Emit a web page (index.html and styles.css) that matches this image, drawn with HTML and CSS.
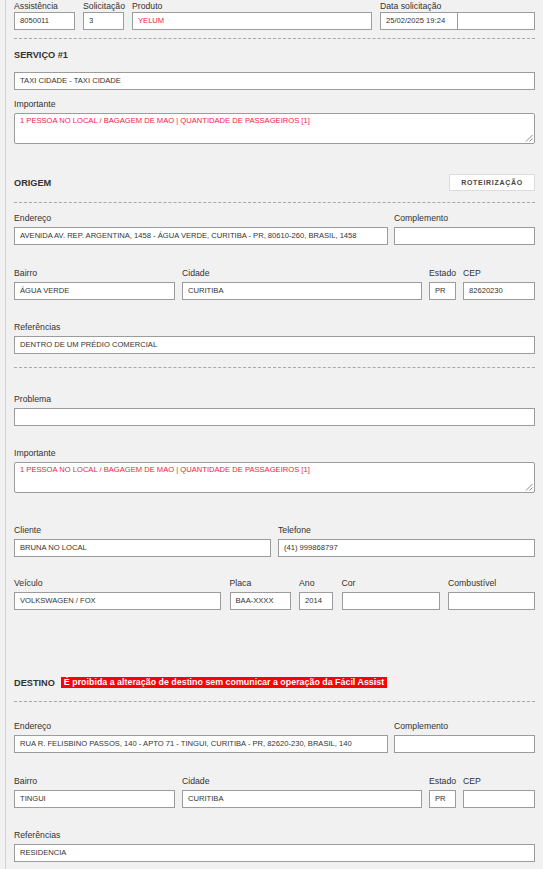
FILE: index.html
```html
<!DOCTYPE html>
<html lang="pt-BR">
<head>
<meta charset="utf-8">
<title>Atendimento</title>
<link rel="stylesheet" href="styles.css">
</head>
<body>
<div class="page">

  <div class="grid g-top">
    <div class="field top"><span class="lbl">Assistência</span><div class="box">8050011</div></div>
    <div class="field top"><span class="lbl">Solicitação</span><div class="box">3</div></div>
    <div class="field top"><span class="lbl">Produto</span><div class="box red">YELUM</div></div>
    <div class="field top"><span class="lbl">Data solicitação</span>
      <div class="pair"><div class="box date">25/02/2025 19:24</div><div class="box time"></div></div>
    </div>
  </div>

  <hr class="dash d1">
  <h3 class="sec s-servico">SERVIÇO #1</h3>
  <div class="box b-servico">TAXI CIDADE - TAXI CIDADE</div>
  <div class="field f-imp1"><span class="lbl">Importante</span>
    <div class="box area red">1 PESSOA NO LOCAL / BAGAGEM DE MAO | QUANTIDADE DE PASSAGEIROS [1]<span class="grip"><svg width="8" height="8" viewBox="0 0 8 8"><path d="M7.5 1 L1 7.5 M7.5 4.5 L4.5 7.5" stroke="#8a8a8a" stroke-width="1"/></svg></span></div>
  </div>

  <div class="sechead h-origem">
    <h3 class="sec">ORIGEM</h3>
    <button class="btn" type="button">ROTEIRIZAÇÃO</button>
  </div>
  <hr class="dash d2">

  <div class="grid g-end r-o1">
    <div class="field"><span class="lbl">Endereço</span><div class="box">AVENIDA AV. REP. ARGENTINA, 1458 - ÁGUA VERDE, CURITIBA - PR, 80610-260, BRASIL, 1458</div></div>
    <div class="field"><span class="lbl">Complemento</span><div class="box"></div></div>
  </div>
  <div class="grid g-bairro r-next">
    <div class="field"><span class="lbl">Bairro</span><div class="box">ÁGUA VERDE</div></div>
    <div class="field"><span class="lbl">Cidade</span><div class="box">CURITIBA</div></div>
    <div class="field"><span class="lbl">Estado</span><div class="box">PR</div></div>
    <div class="field"><span class="lbl">CEP</span><div class="box">82620230</div></div>
  </div>
  <div class="field r-next"><span class="lbl">Referências</span><div class="box">DENTRO DE UM PRÉDIO COMERCIAL</div></div>

  <hr class="dash d3">

  <div class="field r-prob"><span class="lbl">Problema</span><div class="box"></div></div>
  <div class="field r-imp2"><span class="lbl">Importante</span>
    <div class="box area red">1 PESSOA NO LOCAL / BAGAGEM DE MAO | QUANTIDADE DE PASSAGEIROS [1]<span class="grip"><svg width="8" height="8" viewBox="0 0 8 8"><path d="M7.5 1 L1 7.5 M7.5 4.5 L4.5 7.5" stroke="#8a8a8a" stroke-width="1"/></svg></span></div>
  </div>

  <div class="grid g-cli r-cli">
    <div class="field"><span class="lbl">Cliente</span><div class="box">BRUNA NO LOCAL</div></div>
    <div class="field"><span class="lbl">Telefone</span><div class="box">(41) 999868797</div></div>
  </div>
  <div class="grid g-veic r-veic">
    <div class="field"><span class="lbl">Veículo</span><div class="box">VOLKSWAGEN / FOX</div></div>
    <div class="field"><span class="lbl">Placa</span><div class="box">BAA-XXXX</div></div>
    <div class="field"><span class="lbl">Ano</span><div class="box">2014</div></div>
    <div class="field"><span class="lbl">Cor</span><div class="box"></div></div>
    <div class="field"><span class="lbl">Combustível</span><div class="box"></div></div>
  </div>

  <div class="sechead h-destino">
    <h3 class="sec">DESTINO</h3>
    <span class="badge">É proibida a alteração de destino sem comunicar a operação da Fácil Assist</span>
  </div>
  <hr class="dash d4">

  <div class="grid g-end r-d1">
    <div class="field"><span class="lbl">Endereço</span><div class="box">RUA R. FELISBINO PASSOS, 140 - APTO 71 - TINGUI, CURITIBA - PR, 82620-230, BRASIL, 140</div></div>
    <div class="field"><span class="lbl">Complemento</span><div class="box"></div></div>
  </div>
  <div class="grid g-bairro r-next">
    <div class="field"><span class="lbl">Bairro</span><div class="box">TINGUI</div></div>
    <div class="field"><span class="lbl">Cidade</span><div class="box">CURITIBA</div></div>
    <div class="field"><span class="lbl">Estado</span><div class="box">PR</div></div>
    <div class="field"><span class="lbl">CEP</span><div class="box"></div></div>
  </div>
  <div class="field r-next"><span class="lbl">Referências</span><div class="box">RESIDENCIA</div></div>

</div>
</body>
</html>
```

FILE: styles.css
```css
* { box-sizing: border-box; }

html, body {
  margin: 0;
  padding: 0;
  background: #f1f1f1;
}

body {
  font-family: "Liberation Sans", Arial, sans-serif;
  color: #333;
  overflow: hidden;
}

.page {
  margin-left: 5px;
  border-left: 1px solid #d4d4d4;
  padding: 0 8px 0 8px;
  min-height: 869px;
}

.grid { display: grid; }
.g-top { grid-template-columns: 61px 41px 240px 1fr; column-gap: 8px; }
.g-end { grid-template-columns: 374px 1fr; column-gap: 6px; }
.g-bairro { grid-template-columns: 161px 240px 27px 1fr; column-gap: 7px; }
.g-cli { grid-template-columns: 257px 1fr; column-gap: 7px; }
.g-veic { grid-template-columns: 207px 61px 34px 98px 1fr; column-gap: 8.5px; }

.field { display: block; min-width: 0; }

.lbl {
  display: block;
  height: 12px;
  margin-bottom: 3px;
  font-size: 8.7px;
  line-height: 12px;
  color: #333;
  white-space: nowrap;
}
.top .lbl { margin-bottom: 0; }

.box {
  position: relative;
  height: 18px;
  background: #fff;
  border: 1px solid #9c9c9c;
  padding: 0 5px;
  font-size: 7.6px;
  line-height: 16px;
  color: #333;
  white-space: nowrap;
  overflow: hidden;
}

.red { color: #f5203f; }

.pair { display: flex; }
.pair .date { width: 78px; flex: none; }
.pair .time { flex: 1; margin-left: -1px; }

.area {
  height: 31px;
  border-radius: 2px;
  line-height: 10px;
  padding-top: 2px;
}

.grip {
  position: absolute;
  right: 1px;
  bottom: 1px;
  width: 8px;
  height: 8px;
  display: block;
}
.grip svg { display: block; }

.dash {
  border: 0;
  border-top: 1px dashed #a8a8a8;
  height: 0;
  margin: 0;
}

.sec {
  margin: 0;
  font-size: 9.2px;
  line-height: 12px;
  font-weight: bold;
  color: #333;
}

.sechead {
  display: flex;
  align-items: center;
}
.h-origem { justify-content: space-between; height: 17px; }
.h-destino { height: 13px; }

.btn {
  height: 17px;
  width: 86px;
  padding: 0;
  background: #fff;
  border: 1px solid #dcdcdc;
  font-family: "Liberation Sans", Arial, sans-serif;
  font-size: 7px;
  font-weight: bold;
  letter-spacing: 0.7px;
  color: #444;
}

.badge {
  margin-left: 6px;
  background: #ff0000;
  color: #fff;
  font-size: 8.9px;
  font-weight: bold;
  line-height: 11px;
  height: 11px;
  padding: 0 3px;
  white-space: nowrap;
}

/* vertical rhythm */
.d1 { margin-top: 8px; }
.s-servico { margin-top: 10px; }
.b-servico { margin-top: 11px; }
.f-imp1 { margin-top: 8px; }
.h-origem { margin-top: 30px; }
.d2 { margin-top: 11px; }
.r-o1 { margin-top: 9px; }
.r-next { margin-top: 21.5px; }
.d3 { margin-top: 13px; }
.r-prob { margin-top: 25px; }
.r-imp2 { margin-top: 21px; }
.r-cli { margin-top: 31px; }
.r-veic { margin-top: 20px; }
.h-destino { margin-top: 66px; }
.d4 { margin-top: 12px; }
.r-d1 { margin-top: 18px; }
```
